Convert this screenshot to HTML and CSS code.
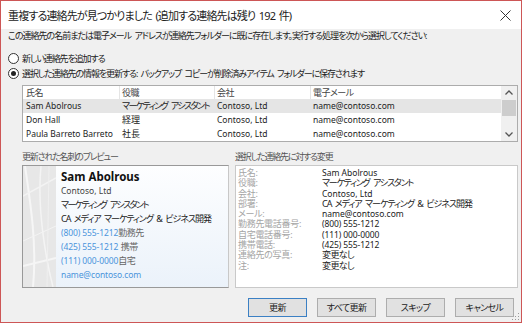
FILE: index.html
```html
<!DOCTYPE html>
<html lang="ja">
<head>
<meta charset="utf-8">
<title>重複する連絡先</title>
<link rel="stylesheet" href="styles.css">
</head>
<body>
<div class="window">
  <div class="titlebar">
    <span class="title">重複する連絡先が見つかりました (追加する連絡先は残り 192 件)</span>
    <svg class="close" width="11" height="11" viewBox="0 0 11 11"><path d="M0.5 0.5 L10.5 10.5 M10.5 0.5 L0.5 10.5" stroke="#333" stroke-width="1" fill="none"/></svg>
  </div>
  <div class="body">
    <p class="intro">この連絡先の名前または電子メール アドレスが連絡先フォルダーに既に存在します。実行する処理を次から選択してください:</p>
    <div class="radio"><span class="circle"></span><span class="radio-text">新しい連絡先を追加する</span></div>
    <div class="radio checked"><span class="circle"></span><span class="radio-text">選択した連絡先の情報を更新する: バックアップ コピーが削除済みアイテム フォルダーに保存されます</span></div>
    <div class="list">
      <div class="grid">
        <div class="row head"><span>氏名</span><span>役職</span><span>会社</span><span>電子メール</span></div>
        <div class="row sel"><span>Sam Abolrous</span><span class="ja kata">マーケティング アシスタント</span><span>Contoso, Ltd</span><span>name@contoso.com</span></div>
        <div class="row"><span>Don Hall</span><span class="ja">経理</span><span>Contoso, Ltd</span><span>name@contoso.com</span></div>
        <div class="row"><span>Paula Barreto Barreto</span><span class="ja">社長</span><span>Contoso, Ltd</span><span>name@contoso.com</span></div>
      </div>
      <div class="scrollbar">
        <svg class="arrow" width="16" height="14" viewBox="0 0 16 14"><path d="M4.5 8.5 L8 5 L11.5 8.5" stroke="#555" stroke-width="1.3" fill="none"/></svg>
        <div class="thumb"></div>
        <div class="track"></div>
        <svg class="arrow" width="16" height="14" viewBox="0 0 16 14"><path d="M4.5 5.5 L8 9 L11.5 5.5" stroke="#555" stroke-width="1.3" fill="none"/></svg>
      </div>
    </div>
    <div class="panes">
      <div class="pane pane-preview">
        <div class="pane-label">更新された名刺のプレビュー</div>
        <div class="card">
          <svg class="strip" width="33" height="121" viewBox="0 0 33 121">
            <rect width="33" height="121" fill="#e7e7e7"/>
            <path d="M2 0 C8 40 14 80 10 121" stroke="#f6f6f6" stroke-width="2" fill="none"/>
            <path d="M18 0 C14 40 22 90 30 121" stroke="#f4f4f4" stroke-width="1.5" fill="none"/>
            <path d="M0 30 L33 12" stroke="#f3f3f3" stroke-width="1.5" fill="none"/>
            <path d="M0 75 L33 60" stroke="#f3f3f3" stroke-width="1" fill="none"/>
            <path d="M0 100 L33 92" stroke="#f5f5f5" stroke-width="2" fill="none"/>
            <path d="M26 0 L24 121" stroke="#efefef" stroke-width="1" fill="none"/>
          </svg>
          <div class="card-text">
            <div class="card-name">Sam Abolrous</div>
            <div class="card-company">Contoso, Ltd</div>
            <div class="kata">マーケティング アシスタント</div>
            <div class="ca">CA メディア マーケティング &amp; ビジネス開発</div>
            <div><span class="link">(800) 555-1212</span><span class="tag">勤務先</span></div>
            <div><span class="link">(425) 555-1212</span> <span class="tag">携帯</span></div>
            <div><span class="link">(111) 000-0000</span><span class="tag">自宅</span></div>
            <div><span class="link">name@contoso.com</span></div>
          </div>
        </div>
      </div>
      <div class="pane pane-changes">
        <div class="pane-label">選択した連絡先に対する変更</div>
        <div class="changes">
          <span class="k">氏名:</span><span class="v">Sam Abolrous</span>
          <span class="k">役職:</span><span class="v kata2">マーケティング アシスタント</span>
          <span class="k">会社:</span><span class="v">Contoso, Ltd</span>
          <span class="k">部署:</span><span class="v ca">CA メディア マーケティング &amp; ビジネス開発</span>
          <span class="k">メール:</span><span class="v">name@contoso.com</span>
          <span class="k">勤務先電話番号:</span><span class="v num">(800) 555-1212</span>
          <span class="k">自宅電話番号:</span><span class="v num">(111) 000-0000</span>
          <span class="k">携帯電話:</span><span class="v num">(425) 555-1212</span>
          <span class="k">連絡先の写真:</span><span class="v jv">変更なし</span>
          <span class="k">注:</span><span class="v jv">変更なし</span>
        </div>
      </div>
    </div>
    <div class="buttons">
      <button class="btn default">更新</button>
      <button class="btn">すべて更新</button>
      <button class="btn">スキップ</button>
      <button class="btn">キャンセル</button>
    </div>
  </div>
  <svg class="grip" width="8" height="8" viewBox="0 0 8 8">
    <rect x="6" y="0" width="1" height="1" fill="#999"/>
    <rect x="3" y="3" width="1" height="1" fill="#999"/><rect x="6" y="3" width="1" height="1" fill="#999"/>
    <rect x="0" y="6" width="1" height="1" fill="#999"/><rect x="3" y="6" width="1" height="1" fill="#999"/><rect x="6" y="6" width="1" height="1" fill="#999"/>
  </svg>
</div>
</body>
</html>
```

FILE: styles.css
```css
* { box-sizing: border-box; }
html, body { margin: 0; padding: 0; background: #f0f0f0; }
body {
  font-family: "Noto Sans", "Noto Sans CJK JP", sans-serif;
  font-size: 9px;
  color: #222;
  font-feature-settings: "palt";
}
.window {
  position: relative;
  width: 522px;
  height: 323px;
  border: 1px solid #cd5656;
  background: #f0f0f0;
  display: flex;
  flex-direction: column;
}
.titlebar {
  height: 28px;
  background: #fff;
  display: flex;
  align-items: center;
  justify-content: space-between;
  padding: 0 10px 0 7px;
  flex: none;
}
.title { font-size: 11px; letter-spacing: -0.85px; word-spacing: 1.5px; color: #222; }
.close { display: block; }
.body {
  flex: 1;
  padding: 0 3px 0 7px;
  display: flex;
  flex-direction: column;
}
.intro { margin: 0; line-height: 14px; height: 14px; white-space: nowrap; letter-spacing: -1px; word-spacing: 2px; }
.radio {
  display: flex;
  align-items: center;
  gap: 3px;
  height: 15px;
  white-space: nowrap;
}
.radio-text { letter-spacing: -1.1px; word-spacing: 2px; }
.radio:first-of-type { margin-top: 8px; }
.circle {
  width: 11px;
  height: 11px;
  border: 1px solid #333;
  border-radius: 50%;
  background: #fff;
  flex: none;
  display: flex;
  align-items: center;
  justify-content: center;
}
.radio.checked .circle::after {
  content: "";
  width: 5px;
  height: 5px;
  border-radius: 50%;
  background: #222;
}
.list {
  margin: 4px 0 0 14px;
  height: 57px;
  border: 1px solid #acacac;
  background: #fff;
  display: flex;
}
.grid { flex: 1; }
.row {
  display: grid;
  grid-template-columns: 96px 95px 96px 1fr;
  height: 14px;
  line-height: 14px;
  white-space: nowrap;
  font-size: 8.5px;
}
.row span { padding-left: 3px; }
.row .ja { font-size: 9px; }
.kata { letter-spacing: -1.5px; word-spacing: 2.5px; }
.kata2 { letter-spacing: -1.2px; word-spacing: 2.5px; }
.ca { letter-spacing: -1px; word-spacing: 2px; }
.row.head { height: 13px; line-height: 13px; color: #444; font-size: 9px; letter-spacing: -0.5px; }
.row.head span + span { border-left: 1px solid #e5e5e5; padding-left: 2px; }
.row.sel { background: #e5e5e5; }
.scrollbar {
  width: 16px;
  background: #f0f0f0;
  display: flex;
  flex-direction: column;
}
.arrow { display: block; flex: none; }
.thumb { height: 16px; margin: 0 1px; background: #cdcdcd; flex: none; }
.track { flex: 1; }
.panes {
  display: flex;
  gap: 6px;
  margin: 8px 0 0 14px;
}
.pane-label { line-height: 14px; height: 15px; color: #555; letter-spacing: -1.2px; }
.pane-preview { width: 207px; }
.pane-changes { flex: 1; }
.card {
  height: 123px;
  border: 1px solid #999;
  border-right-color: #c8c8c8;
  background: linear-gradient(#fdfeff, #ebf2fa);
  display: flex;
}
.strip { display: block; flex: none; }
.card-text { padding: 4px 0 0 5px; line-height: 14px; white-space: nowrap; color: #222; }
.card-name { font-size: 11.5px; font-weight: bold; color: #111; }
.card-company { color: #444; font-size: 8.5px; }
.link { color: #4b94db; font-size: 8.5px; letter-spacing: -0.1px; }
.tag { color: #666; letter-spacing: -0.5px; }
.changes {
  height: 123px;
  border: 1px solid #c9c9c9;
  background: #fff;
  display: grid;
  grid-template-columns: 84px 1fr;
  grid-auto-rows: 10.3px;
  padding: 2px 0 0 2px;
  line-height: 10.3px;
  white-space: nowrap;
}
.k { color: #a4a4a4; letter-spacing: -0.3px; }
.v { color: #222; font-size: 8.5px; }
.v.kata2, .v.ca, .v.jv { font-size: 9px; }
.jv { letter-spacing: -0.6px; }
.num { letter-spacing: -0.1px; }
.buttons {
  display: flex;
  justify-content: flex-end;
  gap: 10px;
  margin-top: 10px;
  padding-right: 4px;
}
.btn {
  width: 59px;
  height: 19px;
  border: 1px solid #adadad;
  background: #e1e1e1;
  font: inherit;
  letter-spacing: -0.6px;
  color: #222;
  padding: 0;
}
.btn.default { border-color: #3b80c4; }
.grip { position: absolute; right: 1px; bottom: 1px; }
```
